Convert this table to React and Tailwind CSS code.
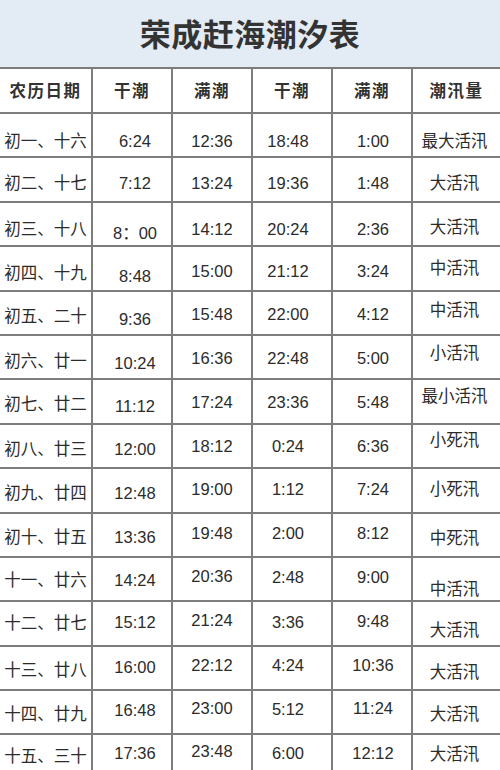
const font = { fontFamily: '"Liberation Sans", "Noto Sans CJK SC", sans-serif' };

const headers = ["农历日期", "干潮", "满潮", "干潮", "满潮", "潮汛量"];

// each row: cells plus a small vertical nudge per cell (the photo is a bit skewed)
const rows = [
  { c: ["初一、十六", "6:24", "12:36", "18:48", "1:00", "最大活汛"], y: ["translate-y-[6px]", "translate-y-[6px]", "translate-y-[6px]", "translate-y-[6px]", "translate-y-[6px]", "translate-y-[6px]"] },
  { c: ["初二、十七", "7:12", "13:24", "19:36", "1:48", "大活汛"], y: ["translate-y-[4px]", "translate-y-[4px]", "translate-y-[4px]", "translate-y-[4px]", "translate-y-[4px]", "translate-y-[4px]"] },
  { c: ["初三、十八", "8：00", "14:12", "20:24", "2:36", "大活汛"], y: ["translate-y-[5px]", "translate-y-[9px]", "translate-y-[5px]", "translate-y-[5px]", "translate-y-[5px]", "translate-y-[3px]"] },
  { c: ["初四、十九", "8:48", "15:00", "21:12", "3:24", "中活汛"], y: ["translate-y-[5px]", "translate-y-[8px]", "translate-y-[3px]", "translate-y-[3px]", "translate-y-[3px]", "translate-y-[0px]"] },
  { c: ["初五、二十", "9:36", "15:48", "22:00", "4:12", "中活汛"], y: ["translate-y-[4px]", "translate-y-[7px]", "translate-y-[2px]", "translate-y-[2px]", "translate-y-[2px]", "translate-y-[-2px]"] },
  { c: ["初六、廿一", "10:24", "16:36", "22:48", "5:00", "小活汛"], y: ["translate-y-[4px]", "translate-y-[6px]", "translate-y-[1px]", "translate-y-[1px]", "translate-y-[1px]", "translate-y-[-4px]"] },
  { c: ["初七、廿二", "11:12", "17:24", "23:36", "5:48", "最小活汛"], y: ["translate-y-[3px]", "translate-y-[5px]", "translate-y-[1px]", "translate-y-[1px]", "translate-y-[1px]", "translate-y-[-5px]"] },
  { c: ["初八、廿三", "12:00", "18:12", "0:24", "6:36", "小死汛"], y: ["translate-y-[3px]", "translate-y-[3px]", "translate-y-[0px]", "translate-y-[0px]", "translate-y-[0px]", "translate-y-[-6px]"] },
  { c: ["初九、廿四", "12:48", "19:00", "1:12", "7:24", "小死汛"], y: ["translate-y-[3px]", "translate-y-[3px]", "translate-y-[-1px]", "translate-y-[-1px]", "translate-y-[-1px]", "translate-y-[-1px]"] },
  { c: ["初十、廿五", "13:36", "19:48", "2:00", "8:12", "中死汛"], y: ["translate-y-[3px]", "translate-y-[3px]", "translate-y-[-1px]", "translate-y-[-1px]", "translate-y-[-1px]", "translate-y-[4px]"] },
  { c: ["十一、廿六", "14:24", "20:36", "2:48", "9:00", "中活汛"], y: ["translate-y-[1px]", "translate-y-[1px]", "translate-y-[-3px]", "translate-y-[-2px]", "translate-y-[-2px]", "translate-y-[10px]"] },
  { c: ["十二、廿七", "15:12", "21:24", "3:36", "9:48", "大活汛"], y: ["translate-y-[0px]", "translate-y-[-1px]", "translate-y-[-3px]", "translate-y-[-1px]", "translate-y-[-2px]", "translate-y-[7px]"] },
  { c: ["十三、廿八", "16:00", "22:12", "4:24", "10:36", "大活汛"], y: ["translate-y-[2px]", "translate-y-[-1px]", "translate-y-[-3px]", "translate-y-[-3px]", "translate-y-[-3px]", "translate-y-[4px]"] },
  { c: ["十四、廿九", "16:48", "23:00", "5:12", "11:24", "大活汛"], y: ["translate-y-[2px]", "translate-y-[-2px]", "translate-y-[-4px]", "translate-y-[-3px]", "translate-y-[-4px]", "translate-y-[2px]"] },
  { c: ["十五、三十", "17:36", "23:48", "6:00", "12:12", "大活汛"], y: ["translate-y-[0px]", "translate-y-[-3px]", "translate-y-[-5px]", "translate-y-[-3px]", "translate-y-[-3px]", "translate-y-[-2px]"] },
];

const colShift = ["", "translate-x-[3px]", "", "-translate-x-[4px]", "translate-x-[1px]", "-translate-x-[2px]"];

const Cell = ({ children, last, className }) => (
  <div
    className={`flex items-center justify-center border-b-2 border-[#7d7d7d] ${
      last ? "" : "border-r-2"
    } ${className}`}
  >
    {children}
  </div>
);

export default function App() {
  return (
    <div className="w-[500px] h-[770px] overflow-hidden bg-white text-[#2b2b2b]" style={font}>
      <div className="h-[67px] bg-[#e3ebf4] flex items-center justify-center">
        <h1 className="text-[31px] font-bold text-[#333] tracking-[0.5px] translate-y-[3px]">
          荣成赶海潮汐表
        </h1>
      </div>

      <div className="grid grid-cols-[93px_80px_80px_80px_80px_1fr] border-t-2 border-[#7d7d7d]">
        {headers.map((h, i) => (
          <Cell key={h + i} last={i === 5} className="h-[45px]">
            <span className="text-[16.5px] font-bold tracking-[1.5px] text-[#333] translate-y-[1px]">
              {h}
            </span>
          </Cell>
        ))}

        {rows.map((r, ri) =>
          r.c.map((v, ci) => (
            <Cell key={ri + "-" + ci} last={ci === 5} className="h-[44.4px]">
              <span className={`text-[16.5px] whitespace-nowrap ${r.y[ci]} ${colShift[ci]}`}>
                {v}
              </span>
            </Cell>
          ))
        )}
      </div>
    </div>
  );
}
